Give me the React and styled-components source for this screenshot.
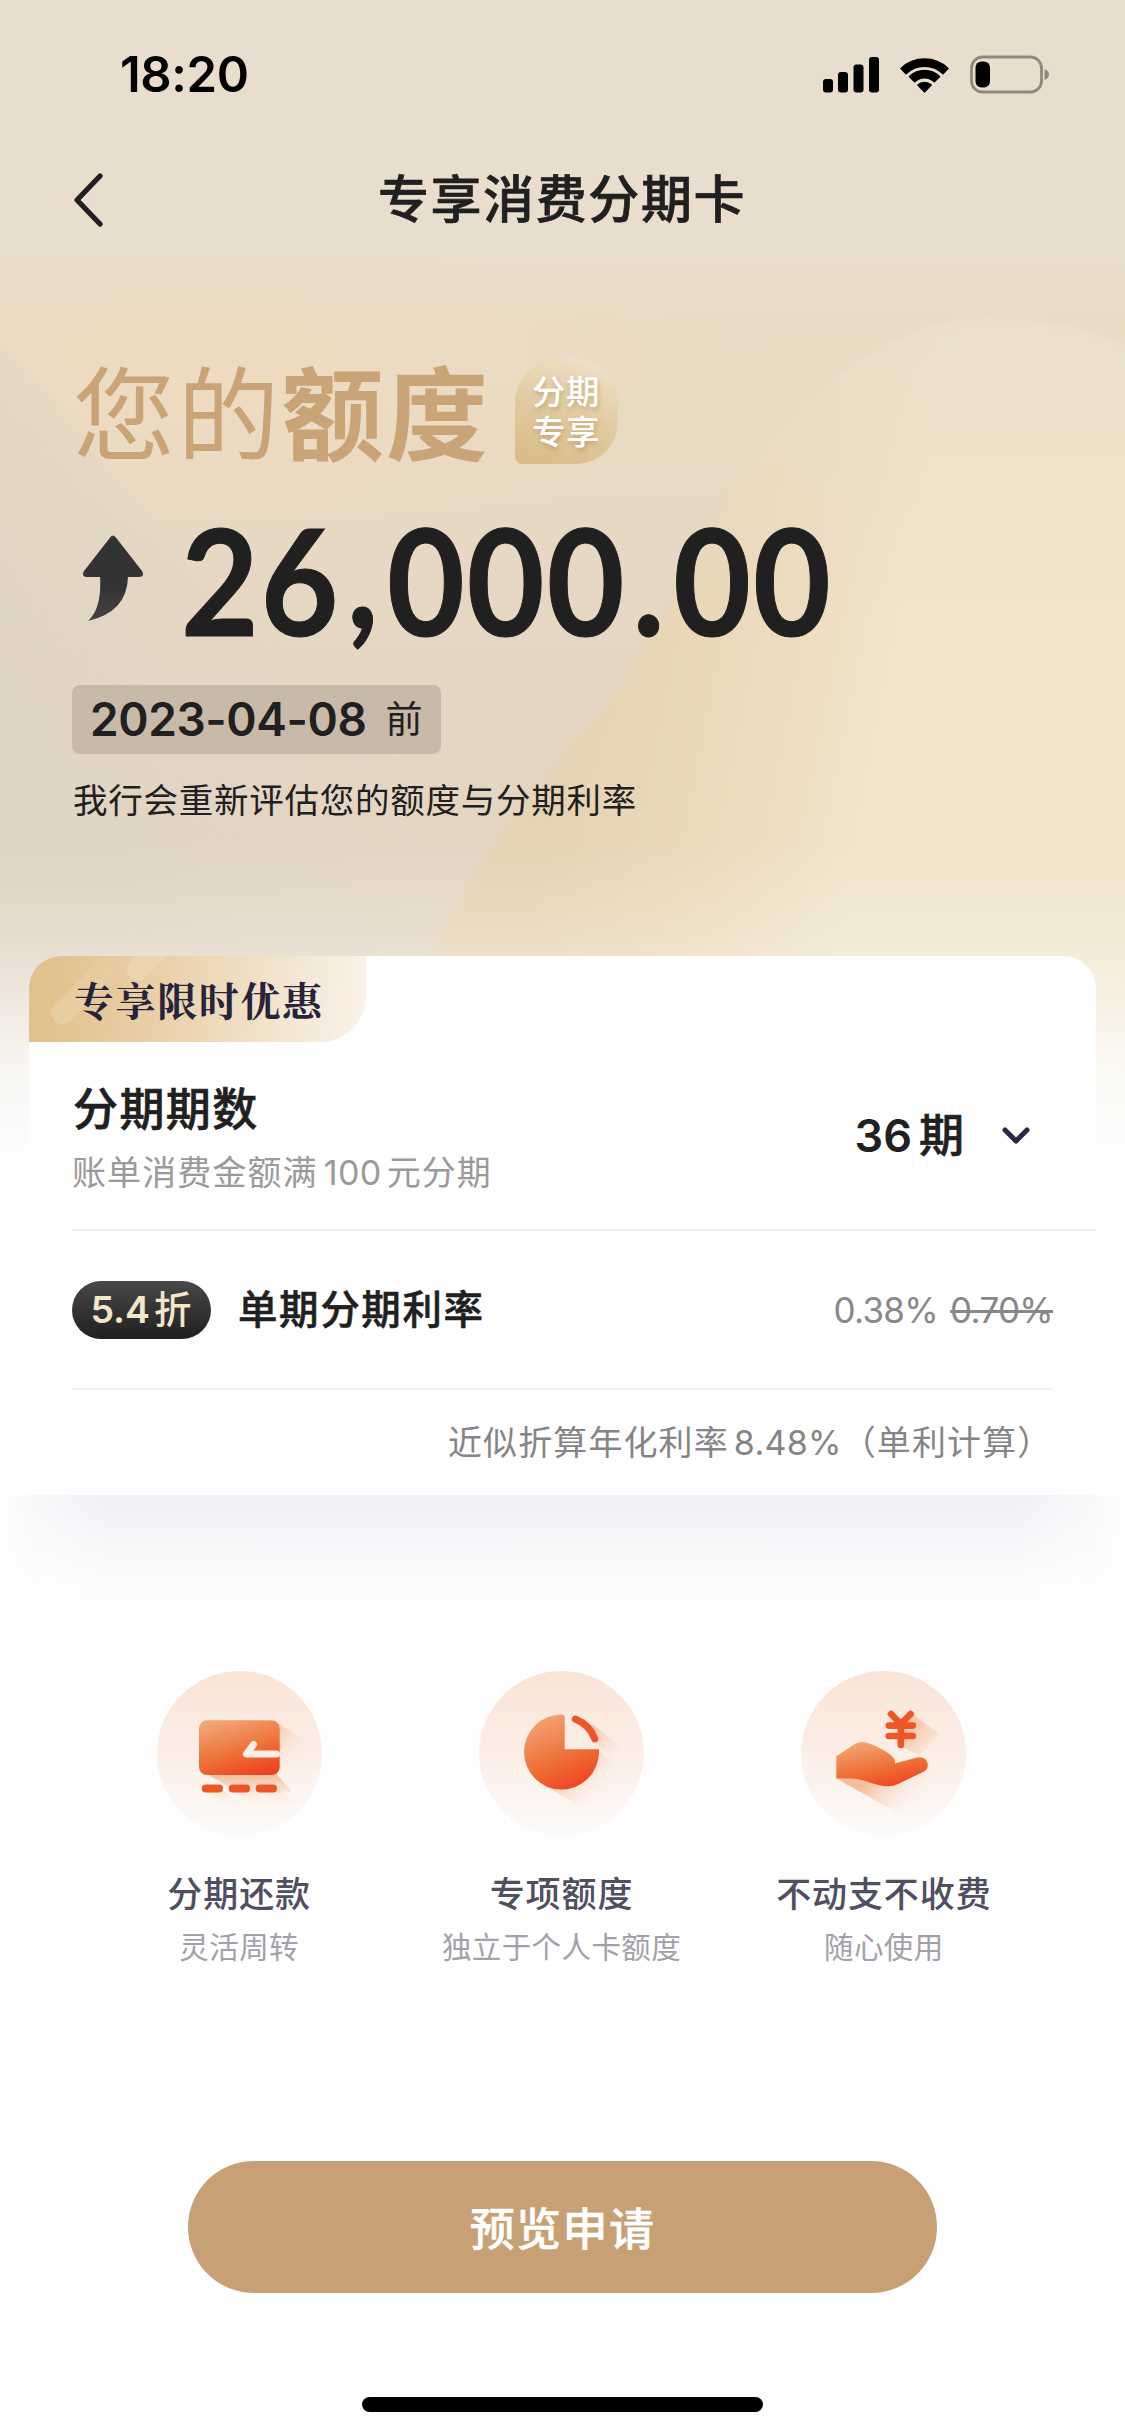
import React from "react";
import styled, { createGlobalStyle } from "styled-components";

const GlobalStyle = createGlobalStyle`
  * { box-sizing: border-box; }
  body {
    margin: 0;
    background: #fefefe;
    font-family: "Inter", "Noto Sans CJK SC", sans-serif;
    color: #202020;
  }
`;

const Screen = styled.div`
  position: relative;
  width: 1125px;
  height: 2435px;
  overflow: hidden;
  display: flex;
  flex-direction: column;
  background: #fefefe;
`;

const Backdrop = styled.svg`
  position: absolute;
  top: 0;
  left: 0;
  z-index: 0;
`;

const Layer = styled.div`
  position: relative;
  z-index: 1;
  display: flex;
  flex-direction: column;
`;

const StatusBar = styled.header`
  height: 150px;
  padding: 0 75px 0 120px;
  display: flex;
  align-items: center;
  justify-content: space-between;
`;

const Clock = styled.div`
  font-size: 49px;
  line-height: 60px;
  font-weight: 600;
  letter-spacing: -0.4px;
  color: #000;
`;

const NavBar = styled.nav`
  height: 112px;
  padding: 0 75px 13px 74px;
  display: grid;
  grid-template-columns: 60px 1fr 60px;
  align-items: center;
`;

const NavTitle = styled.h1`
  margin: 0;
  text-align: center;
  font-size: 51px;
  line-height: 72px;
  font-weight: 500;
  letter-spacing: 1.6px;
  -webkit-text-stroke: 0.7px currentColor;
`;

const Hero = styled.section`
  height: 694px;
  padding: 96px 73px 0;
`;

const HeroHeading = styled.div`
  height: 106px;
  display: flex;
  align-items: center;
  gap: 28px;
`;

const HeroTitle = styled.h2`
  margin: 9px 0 0;
  width: 414px;
  white-space: nowrap;
  font-size: 102px;
  line-height: 106px;
  font-weight: 400;
  letter-spacing: 2.3px;
  color: #c9a477;

  b { font-weight: 700; }
`;

const ExclusiveTag = styled.div`
  width: 103px;
  height: 106px;
  padding: 14px 0 0 17px;
  border-radius: 46px 46px 42px 8px;
  background: linear-gradient(200deg, #efe2ca 5%, #e2cba2 50%, #d8ba86 100%);
  color: #fff;
  font-size: 33.5px;
  line-height: 40px;
  font-weight: 500;
  letter-spacing: 0.5px;
  text-shadow: 1px 3px 5px rgba(160, 120, 60, 0.45);
`;

const AmountRow = styled.div`
  height: 108px;
  margin-top: 61px;
  padding-left: 9px;
  display: flex;
  align-items: center;
`;

const Amount = styled.div`
  margin-left: 37px;
  white-space: nowrap;
  font-family: "Lato", sans-serif;
  font-weight: 700;
  font-size: 148px;
  line-height: 108px;
  letter-spacing: 2.4px;
  -webkit-text-stroke: 1px currentColor;
  transform: scaleX(0.905);
  transform-origin: 0 50%;
`;

const Mark = styled.span`
  margin: 0 ${(p) => p.$right}px 0 ${(p) => p.$left}px;
  line-height: 0;
  vertical-align: ${(p) => p.$lift || 0}px;
`;

const DateChip = styled.div`
  width: 369px;
  height: 69px;
  margin: 52px 0 0 -1px;
  padding-left: 18px;
  display: flex;
  align-items: center;
  gap: 19px;
  border-radius: 8px;
  background: #c7baa9;
  font-size: 46px;
  font-weight: 600;
  line-height: 69px;
  letter-spacing: -0.4px;
  white-space: nowrap;

  small { font-size: 37px; font-weight: 400; }
`;

const HeroNote = styled.p`
  margin: 20px 0 0 0;
  font-size: 34.5px;
  line-height: 54px;
  letter-spacing: 0.75px;
`;

const Card = styled.section`
  width: 1067px;
  height: 539px;
  margin-left: 29px;
  border-radius: 32px 32px 0 0;
  overflow: hidden;
  background: #fefefe;
`;

const PromoTab = styled.div`
  position: relative;
  width: 337px;
  height: 86px;
  overflow: hidden;
  padding-left: 45px;
  border-radius: 0 0 46px 0;
  background: linear-gradient(95deg, #e1c18d 5%, #e9d0a8 38%, #f1e1c8 68%, #faf3e9 100%);
  font-family: "Noto Serif CJK SC", "Songti SC", "Noto Sans CJK SC", serif;
  font-size: 40px;
  line-height: 86px;
  font-weight: 700;
  letter-spacing: 1.6px;
  color: #26243c;
`;

const Streak = styled.i`
  position: absolute;
  left: ${(p) => p.$x}px;
  top: ${(p) => p.$y}px;
  width: 100px;
  height: 22px;
  border-radius: 11px;
  transform: rotate(-45deg);
  transform-origin: 11px 11px;
  background: linear-gradient(90deg, rgba(255, 248, 232, 0.22), rgba(255, 248, 232, 0));
`;

const TabText = styled.span`
  position: relative;
`;

const TermRow = styled.div`
  height: 189px;
  margin-left: 43px;
  padding-right: 65px;
  display: flex;
  justify-content: space-between;
  border-bottom: 2px solid #ededee;
`;

const TermLabel = styled.div`
  padding-top: 35px;
`;

const TermTitle = styled.h3`
  margin: 0 0 0 1px;
  font-size: 45px;
  line-height: 66px;
  font-weight: 500;
  letter-spacing: 1.4px;
  -webkit-text-stroke: 0.6px currentColor;
`;

const TermHint = styled.p`
  margin: 4px 0 0;
  font-size: 34px;
  line-height: 52px;
  letter-spacing: 1.1px;
  color: #9a9a9a;
`;

const Num = styled.span`
  margin: 0 ${(p) => p.$right}px 0 ${(p) => p.$left}px;
  letter-spacing: ${(p) => p.$track}px;
`;

const TermValue = styled.div`
  height: 187px;
  display: flex;
  align-items: center;
  gap: 37px;
  font-size: 45px;
  line-height: 60px;
  font-weight: 600;
`;

const TermText = styled.span`
  b {
    font-weight: 500;
    margin-left: 7px;
    -webkit-text-stroke: 0.6px currentColor;
  }
`;

const RateRow = styled.div`
  height: 159px;
  margin: 0 43px;
  display: flex;
  align-items: center;
  border-bottom: 2px solid #f1f1f3;
`;

const DiscountPill = styled.span`
  width: 139px;
  height: 58px;
  padding-right: 1px;
  display: flex;
  align-items: center;
  justify-content: center;
  gap: 4px;
  border-radius: 29px;
  background: linear-gradient(#484848, #202020);
  color: #f3e6c9;
  font-size: 37.5px;
  font-weight: 600;
  line-height: 58px;

  b { font-weight: 500; }
`;

const RateTitle = styled.span`
  margin-left: 27px;
  font-size: 39.5px;
  line-height: 60px;
  font-weight: 500;
  letter-spacing: 1.6px;
  -webkit-text-stroke: 0.5px currentColor;
`;

const RateValue = styled.span`
  margin-left: auto;
  display: flex;
  gap: 12px;
  font-size: 35px;
  line-height: 60px;
  letter-spacing: -0.7px;
  color: #888;
`;

const AnnualRate = styled.p`
  margin: 0;
  padding: 26px 0 0 419px;
  white-space: nowrap;
  font-size: 34px;
  line-height: 54px;
  letter-spacing: 1.1px;
  color: #858585;
`;

const CardShade = styled.div`
  height: 176px;
  background: linear-gradient(#eff1f5 0, #f2f4f7 24px, #f7f8fa 55px, #fcfcfd 85px, #fefefe 120px);
  mask-image: linear-gradient(90deg, transparent 0, rgba(0, 0, 0, 0.55) 45px, #000 110px, #000 1015px, rgba(0, 0, 0, 0.55) 1080px, transparent 100%);
`;

const Features = styled.section`
  width: 967px;
  height: 490px;
  margin-left: 78px;
  display: grid;
  grid-template-columns: repeat(3, 1fr);
`;

const Feature = styled.div`
  display: flex;
  flex-direction: column;
  align-items: center;
`;

const FeatureTitle = styled.h4`
  margin: 30px 0 0;
  font-size: 35px;
  line-height: 56px;
  font-weight: 500;
  letter-spacing: 0.9px;
  white-space: nowrap;
  color: #504f60;
`;

const FeatureNote = styled.p`
  margin: 2px 0 0;
  font-size: 29.5px;
  line-height: 46px;
  letter-spacing: 0.4px;
  white-space: nowrap;
  color: #a2a1aa;
`;

const PrimaryButton = styled.button`
  width: 749px;
  height: 132px;
  align-self: center;
  border: 0;
  padding: 0 0 2px;
  border-radius: 66px;
  background: #c7a175;
  color: #fff;
  font-family: inherit;
  font-size: 45px;
  font-weight: 500;
  letter-spacing: 1.4px;
  -webkit-text-stroke: 0.4px currentColor;
`;

const HomeBar = styled.div`
  width: 401px;
  height: 15px;
  margin-top: 104px;
  align-self: center;
  border-radius: 8px;
  background: #000;
`;

function HeroBackdrop() {
  return (
    <Backdrop width="1125" height="1200" viewBox="0 0 1125 1200" aria-hidden="true">
      <defs>
        <linearGradient id="base" x1="0" y1="0" x2="0" y2="1">
          <stop offset="0" stopColor="#ebddc8" />
          <stop offset="0.35" stopColor="#e9dac4" />
          <stop offset="0.6" stopColor="#e5d6c3" />
          <stop offset="1" stopColor="#e3d5c3" />
        </linearGradient>
        <radialGradient id="glow" cx="0.5" cy="0.5" r="0.5">
          <stop offset="0" stopColor="#eedcc0" stopOpacity="0.8" />
          <stop offset="1" stopColor="#eedcc0" stopOpacity="0" />
        </radialGradient>
        <linearGradient id="blob" gradientUnits="userSpaceOnUse" x1="560" y1="790" x2="860" y2="850">
          <stop offset="0" stopColor="#e6d3b4" />
          <stop offset="0.5" stopColor="#ebdabb" />
          <stop offset="1" stopColor="#f1e4cb" />
        </linearGradient>
        <linearGradient id="blobTop" gradientUnits="userSpaceOnUse" x1="0" y1="315" x2="0" y2="600">
          <stop offset="0" stopColor="#eadfcb" stopOpacity="0.8" />
          <stop offset="1" stopColor="#eadfcb" stopOpacity="0" />
        </linearGradient>
        <linearGradient id="side" gradientUnits="userSpaceOnUse" x1="0" y1="700" x2="240" y2="560">
          <stop offset="0" stopColor="#e0d4c2" />
          <stop offset="1" stopColor="#e2d6c4" stopOpacity="0.3" />
        </linearGradient>
        <linearGradient id="head" x1="0" y1="0" x2="0" y2="1">
          <stop offset="0" stopColor="#e9decd" />
          <stop offset="0.76" stopColor="#e9decd" />
          <stop offset="1" stopColor="#e9decd" stopOpacity="0" />
        </linearGradient>
        <linearGradient id="fade" gradientUnits="userSpaceOnUse" x1="0" y1="840" x2="0" y2="1160">
          <stop offset="0" stopColor="#fefefe" stopOpacity="0" />
          <stop offset="0.3" stopColor="#fefefe" stopOpacity="0.2" />
          <stop offset="0.5" stopColor="#fefefe" stopOpacity="0.48" />
          <stop offset="0.72" stopColor="#fefefe" stopOpacity="0.82" />
          <stop offset="1" stopColor="#fefefe" />
        </linearGradient>
        <filter id="soft" x="-20%" y="-20%" width="140%" height="140%">
          <feGaussianBlur stdDeviation="4" />
        </filter>
      </defs>
      <rect width="1125" height="1200" fill="url(#base)" />
      <ellipse cx="200" cy="350" rx="560" ry="200" fill="url(#glow)" />
      <path d="M-20 330Q40 385 79 431L143 514Q190 575 237 623C330 710 420 760 500 830L420 1200H-20Z" fill="url(#side)" filter="url(#soft)" />
      <path d="M985 322C880 324 805 400 755 463C722 505 672 600 640 655C600 725 515 795 450 915L390 1060V1200H1145V357C1090 332 1040 321 985 322Z" fill="url(#blob)" filter="url(#soft)" />
      <path d="M985 320C880 322 800 400 753 463L670 600H1145V355C1090 330 1040 319 985 320Z" fill="url(#blobTop)" />
      <rect width="1125" height="320" fill="url(#head)" />
      <rect y="830" width="1125" height="370" fill="url(#fade)" />
    </Backdrop>
  );
}

function StatusIcons() {
  return (
    <svg width="228" height="40" viewBox="822 55 228 40">
      <g>
        <rect x="823" y="79" width="10" height="13.5" rx="3" />
        <rect x="838" y="72" width="10" height="20.5" rx="3" />
        <rect x="853.5" y="64.5" width="10" height="28" rx="3" />
        <rect x="869" y="57" width="10" height="35.5" rx="3" />
      </g>
      <path d="M901 68.5A34 34 0 0 1 948 68.5L943 73.7A26.5 26.5 0 0 0 906 73.7Z" stroke="#000" strokeWidth="1.5" strokeLinejoin="round" />
      <path d="M909.5 76.6A21.5 21.5 0 0 1 939.5 76.6L934.3 81.8A14 14 0 0 0 914.7 81.8Z" stroke="#000" strokeWidth="1.5" strokeLinejoin="round" />
      <path d="M917.7 85A9.8 9.8 0 0 1 931.3 85L924.5 92Z" stroke="#000" strokeWidth="1.2" strokeLinejoin="round" />
      <rect x="971.5" y="57" width="70" height="35" rx="11" fill="none" stroke="#8f897d" strokeWidth="2.8" />
      <rect x="975.5" y="61.5" width="14.5" height="26" rx="6" />
      <path d="M1044.5 69Q1049 71 1049 74.5T1044.5 80Z" fill="#8f897d" />
    </svg>
  );
}

const BackIcon = () => (
  <svg width="30" height="54" viewBox="0 0 30 54" fill="none">
    <path d="M26 3L3 27L26 51" stroke="#202020" strokeWidth="5.2" strokeLinecap="round" strokeLinejoin="round" />
  </svg>
);

const RiseIcon = () => (
  <svg width="62" height="88" viewBox="0 0 62 88">
    <defs>
      <linearGradient id="rise" x1="0" y1="0" x2="0" y2="1">
        <stop offset="0.6" stopColor="#333" />
        <stop offset="1" stopColor="#454341" />
      </linearGradient>
    </defs>
    <path d="M28.5 2Q31 -1 33.5 2L60 36Q63 42 57 42H46Q45 77 6 86Q20 73 18 42H5Q-1 42 2 36Z" fill="url(#rise)" />
  </svg>
);

const DownIcon = () => (
  <svg width="30" height="20" viewBox="0 0 30 20" fill="none">
    <path d="M4 4L15 15L26 4" stroke="#2a2740" strokeWidth="5" strokeLinecap="round" strokeLinejoin="round" />
  </svg>
);

function IconDisc({ id, children }) {
  return (
    <svg width="165" height="165" viewBox="0 0 165 165">
      <defs>
        <linearGradient id={id + "Disc"} x1="0" y1="0" x2="0" y2="1">
          <stop offset="0" stopColor="#fae4d6" />
          <stop offset="0.5" stopColor="#fceee6" />
          <stop offset="1" stopColor="#fcfbfb" />
        </linearGradient>
        <linearGradient id={id + "Fill"} x1="0.25" y1="0" x2="0.7" y2="1">
          <stop offset="0" stopColor="#f1a676" />
          <stop offset="0.6" stopColor="#ee6e35" />
          <stop offset="1" stopColor="#ee4322" />
        </linearGradient>
        <linearGradient id={id + "Shade"} gradientUnits="userSpaceOnUse" x1="82" y1="90" x2="125" y2="125">
          <stop offset="0" stopColor="#f09a64" stopOpacity="0.6" />
          <stop offset="1" stopColor="#fbe9df" stopOpacity="0" />
        </linearGradient>
        <linearGradient id={id + "Side"} gradientUnits="userSpaceOnUse" x1="110" y1="60" x2="146" y2="90">
          <stop offset="0" stopColor="#f09a64" stopOpacity="0.45" />
          <stop offset="1" stopColor="#fbe9df" stopOpacity="0" />
        </linearGradient>
        <linearGradient id={id + "Low"} gradientUnits="userSpaceOnUse" x1="0" y1="106" x2="0" y2="137">
          <stop offset="0" stopColor="#f09a64" stopOpacity="0.55" />
          <stop offset="1" stopColor="#fbe9df" stopOpacity="0" />
        </linearGradient>
      </defs>
      <circle cx="82.5" cy="82.5" r="82.5" fill={`url(#${id}Disc)`} />
      {children}
    </svg>
  );
}

const RepayIcon = () => (
  <IconDisc id="repay">
    <path d="M121 52L157 76L147 110L121 103Z" fill="url(#repaySide)" />
    <path d="M50 103L80 121H135L118 101Z" fill="url(#repayLow)" />
    <path d="M48 120L72 136L84 133L64 118ZM75 120L104 137L116 133L92 118ZM102 120L124 136L136 131L119 116Z" fill="url(#repayLow)" />
    <rect x="42" y="49.3" width="80.7" height="54.7" rx="8" fill="url(#repayFill)" />
    <path d="M96.5 73.5L89.5 83H119.5" fill="none" stroke="#fdeee4" strokeWidth="7" strokeLinecap="round" strokeLinejoin="round" />
    <path d="M48.7 117.5H62M75.7 117.5H89M102.7 117.5H116" stroke="#ef5626" strokeWidth="8" strokeLinecap="round" />
  </IconDisc>
);

const QuotaIcon = () => (
  <IconDisc id="quota">
    <path d="M113 53L146 78L127 82L113 68Z" fill="url(#quotaSide)" />
    <path d="M66 115L112 141Q139 130 144 96L118 79L83 82Z" fill="url(#quotaShade)" />
    <path d="M85.7 46.5V78.3H120V81A37.5 37.5 0 1 1 82.5 43.5Q85.7 43.2 85.7 46.5Z" fill="url(#quotaFill)" />
    <path d="M96.3 48Q111 54 115.8 68" fill="none" stroke="#ef5626" strokeWidth="7" strokeLinecap="round" />
  </IconDisc>
);

const FreeIcon = () => (
  <IconDisc id="free">
    <path d="M111 43L138 63L118 84L101 76V55Z" fill="url(#freeSide)" />
    <path d="M35.3 107.6L102 145Q132 138 148 105L126 92L88 105Z" fill="url(#freeShade)" />
    <path d="M35.3 85.3L53 73.5Q58 70 64 71.3C74 74 83 79 89 83.5Q95 88 93.8 92.6L116 86.5Q125 85 126.8 93Q127 98 123 100.5L97 113Q91 116 84 115.2C72 114 65 108.5 51 107.6H35.3Z" fill="url(#freeFill)" />
    <path d="M90 43L99.8 53L109.6 43M99.8 53V74M87.8 54.6H111.8M87.8 65H111.8" fill="none" stroke="#ef5626" strokeWidth="6.6" strokeLinecap="round" strokeLinejoin="round" />
  </IconDisc>
);

const FEATURES = [
  { Icon: RepayIcon, title: "分期还款", note: "灵活周转" },
  { Icon: QuotaIcon, title: "专项额度", note: "独立于个人卡额度" },
  { Icon: FreeIcon, title: "不动支不收费", note: "随心使用" },
];

export default function App() {
  return (
    <Screen lang="zh-CN">
      <GlobalStyle />
      <HeroBackdrop />
      <Layer>
        <StatusBar>
          <Clock>18:20</Clock>
          <StatusIcons />
        </StatusBar>
        <NavBar>
          <BackIcon />
          <NavTitle>专享消费分期卡</NavTitle>
        </NavBar>
        <Hero>
          <HeroHeading>
            <HeroTitle>您的<b>额度</b></HeroTitle>
            <ExclusiveTag>分期<br />专享</ExclusiveTag>
          </HeroHeading>
          <AmountRow>
            <RiseIcon />
            <Amount>
              26<Mark $left={7} $right={7} $lift={8}>,</Mark>000<Mark $left={7} $right={7}>.</Mark>00
            </Amount>
          </AmountRow>
          <DateChip>2023-04-08<small>前</small></DateChip>
          <HeroNote>我行会重新评估您的额度与分期利率</HeroNote>
        </Hero>
        <Card>
          <PromoTab>
            <Streak $x={22} $y={46} />
            <Streak $x={98} $y={2} />
            <TabText>专享限时优惠</TabText>
          </PromoTab>
          <TermRow>
            <TermLabel>
              <TermTitle>分期期数</TermTitle>
              <TermHint>账单消费金额满<Num $left={6} $right={5} $track={0.4}>100</Num>元分期</TermHint>
            </TermLabel>
            <TermValue>
              <TermText>36<b>期</b></TermText>
              <DownIcon />
            </TermValue>
          </TermRow>
          <RateRow>
            <DiscountPill>5.4<b>折</b></DiscountPill>
            <RateTitle>单期分期利率</RateTitle>
            <RateValue><span>0.38%</span><s>0.70%</s></RateValue>
          </RateRow>
          <AnnualRate>近似折算年化利率<Num $left={5} $right={0} $track={0.3}>8.48%</Num>（单利计算）</AnnualRate>
        </Card>
        <CardShade />
        <Features>
          {FEATURES.map(({ Icon, title, note }) => (
            <Feature key={title}>
              <Icon />
              <FeatureTitle>{title}</FeatureTitle>
              <FeatureNote>{note}</FeatureNote>
            </Feature>
          ))}
        </Features>
        <PrimaryButton>预览申请</PrimaryButton>
        <HomeBar />
      </Layer>
    </Screen>
  );
}
